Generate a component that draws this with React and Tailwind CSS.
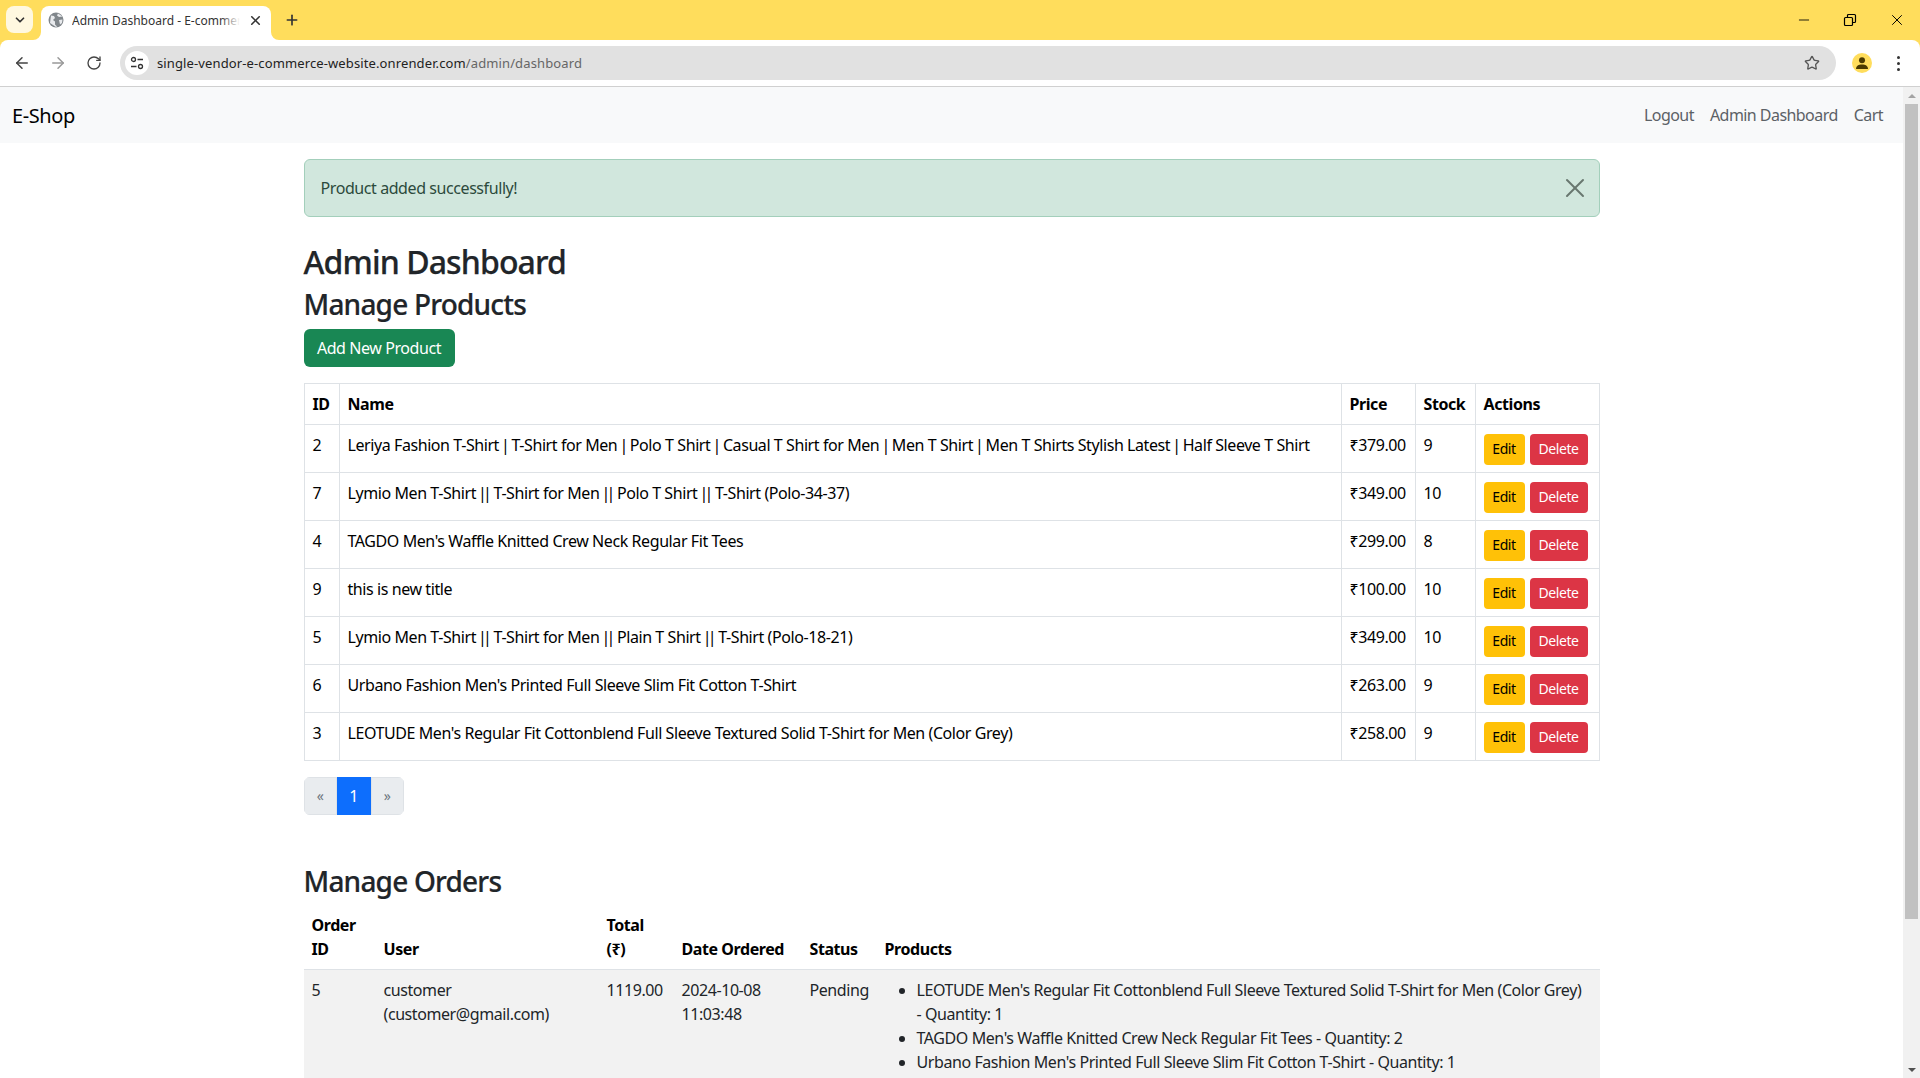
import { ArrowLeft, ArrowRight, ChevronDown, Minus, Plus, RotateCw, Star, X } from 'lucide-react';

const PRODUCTS = [
  { id: 2, name: 'Leriya Fashion T-Shirt | T-Shirt for Men | Polo T Shirt | Casual T Shirt for Men | Men T Shirt | Men T Shirts Stylish Latest | Half Sleeve T Shirt', price: '₹379.00', stock: 9 },
  { id: 7, name: 'Lymio Men T-Shirt || T-Shirt for Men || Polo T Shirt || T-Shirt (Polo-34-37)', price: '₹349.00', stock: 10 },
  { id: 4, name: "TAGDO Men's Waffle Knitted Crew Neck Regular Fit Tees", price: '₹299.00', stock: 8 },
  { id: 9, name: 'this is new title', price: '₹100.00', stock: 10 },
  { id: 5, name: 'Lymio Men T-Shirt || T-Shirt for Men || Plain T Shirt || T-Shirt (Polo-18-21)', price: '₹349.00', stock: 10 },
  { id: 6, name: "Urbano Fashion Men's Printed Full Sleeve Slim Fit Cotton T-Shirt", price: '₹263.00', stock: 9 },
  { id: 3, name: "LEOTUDE Men's Regular Fit Cottonblend Full Sleeve Textured Solid T-Shirt for Men (Color Grey)", price: '₹258.00', stock: 9 },
];

const ORDER_ITEMS = [
  "LEOTUDE Men's Regular Fit Cottonblend Full Sleeve Textured Solid T-Shirt for Men (Color Grey) - Quantity: 1",
  "TAGDO Men's Waffle Knitted Crew Neck Regular Fit Tees - Quantity: 2",
  "Urbano Fashion Men's Printed Full Sleeve Slim Fit Cotton T-Shirt - Quantity: 1",
];

// the pipe is much wider in this font than in the original, so tighten it
function ProductName({ name }) {
  return name.split('|').map((part, index) => (
    <span key={index}>
      {index > 0 && <span className="mx-[-1.7px]">|</span>}
      {part}
    </span>
  ));
}

function TabCorner({ flip }) {
  return (
    <svg width="8" height="8" viewBox="0 0 8 8" className={`shrink-0 self-end ${flip ? '-scale-x-100' : ''}`}>
      <path d="M8 0v8H0a8 8 0 0 0 8-8z" fill="#fff" />
    </svg>
  );
}

function BrowserChrome() {
  return (
    <div className="shrink-0 font-['Noto_Sans',sans-serif]">
      <div className="flex h-10 items-end bg-[#ffdd5c] pl-[6px]">
        <div className="mb-[7px] flex h-[27px] w-[27px] items-center justify-center rounded-lg bg-[#fff8e0]">
          <ChevronDown size={14} strokeWidth={3} className="text-[#333]" />
        </div>
        <TabCorner />
        <div className="relative flex h-[34px] w-[230px] items-center rounded-t-lg bg-white pb-[6px] pl-[7px]">
          <svg width="16" height="16" viewBox="0 0 16 16" className="shrink-0">
            <circle cx="8" cy="8" r="7.5" fill="#80868b" />
            <path d="M3 3.5l3 .5 1 2-2 2 2 1.5v3l2 2-1 .5-6-4zM10 1.5l-1 2 2 1.5 3.5-.5zM11 8l3.5-.5L14 11l-2 1.5z" fill="#e8eaed" />
          </svg>
          <div className="relative ml-[8px] w-[168px] overflow-hidden whitespace-nowrap pt-px text-[12px] tracking-normal text-[#333]">
            Admin Dashboard - E-commerce
            <div className="absolute inset-y-0 right-0 w-5 bg-gradient-to-r from-transparent to-white" />
          </div>
          <X size={15} strokeWidth={2.5} className="ml-[8px] text-[#333]" />
        </div>
        <TabCorner flip />
        <Plus size={16} strokeWidth={2.5} className="mb-[12px] ml-[5px] text-[#333]" />
        <div className="mb-[12px] ml-auto flex h-4 items-center gap-[30px] pr-[14px] text-black">
          <Minus size={16} strokeWidth={1.3} />
          <svg width="16" height="16" viewBox="0 0 16 16" fill="none" stroke="currentColor" strokeWidth="1.2">
            <rect x="2.5" y="5.5" width="8" height="8" rx="1" />
            <path d="M5.5 5V3.5a1 1 0 0 1 1-1h6a1 1 0 0 1 1 1v6a1 1 0 0 1-1 1H11" />
          </svg>
          <X size={18} strokeWidth={1.3} />
        </div>
      </div>
      <div className="bg-[#ffdd5c]">
        <div className="flex h-[46px] items-center rounded-t-lg bg-white pl-[13px] pr-[20px] text-[#444]">
          <ArrowLeft size={18} strokeWidth={2} />
          <ArrowRight size={18} strokeWidth={2} className="ml-[18px] text-[#999]" />
          <RotateCw size={16} strokeWidth={2} className="ml-[19px]" />
          <div className="ml-[18px] flex h-[34px] w-[1716px] items-center rounded-full bg-[#e1e1e1] pl-[5px] pr-[16px]">
            <div className="flex h-6 w-6 items-center justify-center rounded-full bg-white">
              <svg width="14" height="14" viewBox="0 0 14 14" fill="none" stroke="#333" strokeWidth="1.3">
                <circle cx="3.5" cy="3.5" r="2" />
                <path d="M7.5 3.5H13M1 10.5h5.5" />
                <circle cx="10.5" cy="10.5" r="2" />
              </svg>
            </div>
            <div className="ml-[8px] whitespace-nowrap text-[13px] tracking-[0.12px] text-[#222]">
              single-vendor-e-commerce-website.onrender.com<span className="text-[#666]">/admin/dashboard</span>
            </div>
            <Star size={16} strokeWidth={2} className="ml-auto text-[#555]" />
          </div>
          <div className="ml-[16px] flex h-5 w-5 items-center justify-center overflow-hidden rounded-full bg-[#ffdd5c]">
            <svg width="14" height="14" viewBox="0 0 14 14" fill="#4a3a00">
              <circle cx="7" cy="4.3" r="3" />
              <path d="M1 13c0-3.2 2.6-4.5 6-4.5s6 1.3 6 4.5z" />
            </svg>
          </div>
          <div className="ml-auto flex flex-col gap-[3px]">
            <span className="h-[3px] w-[3px] rounded-full bg-[#333]" />
            <span className="h-[3px] w-[3px] rounded-full bg-[#333]" />
            <span className="h-[3px] w-[3px] rounded-full bg-[#333]" />
          </div>
        </div>
      </div>
      <div className="h-px bg-[#d0d0d0]" />
    </div>
  );
}

function Scrollbar() {
  return (
    <div className="flex w-[17px] shrink-0 flex-col items-center bg-[#f1f1f1]">
      <div className="flex h-[17px] items-center justify-center">
        <div className="h-0 w-0 border-x-[4px] border-b-[4px] border-x-transparent border-b-[#a3a3a3]" />
      </div>
      <div className="h-[815px] w-[13px] bg-[#c1c1c1]" />
      <div className="mt-auto flex h-[17px] items-center justify-center">
        <div className="h-0 w-0 border-x-[4px] border-t-[4px] border-x-transparent border-t-[#505050]" />
      </div>
    </div>
  );
}

function ProductsTable() {
  const th = 'border border-[#dee2e6] p-2 text-left font-bold';
  const td = 'border border-[#dee2e6] p-2 align-top';
  return (
    <table className="w-full table-fixed border-collapse text-black">
      <thead>
        <tr className="h-[41px]">
          <th className={`${th} w-[35px]`}>ID</th>
          <th className={th}>Name</th>
          <th className={`${th} w-[74px]`}>Price</th>
          <th className={`${th} w-[60px]`}>Stock</th>
          <th className={`${th} w-[124px]`}>Actions</th>
        </tr>
      </thead>
      <tbody>
        {PRODUCTS.map((product) => (
          <tr key={product.id} className="h-[48px]">
            <td className={td}>{product.id}</td>
            <td className={`${td} whitespace-nowrap`}><ProductName name={product.name} /></td>
            <td className={td}>{product.price}</td>
            <td className={td}>{product.stock}</td>
            <td className={td}>
              <div className="-mb-px mt-px flex gap-[5px] text-[14px]">
                <button type="button" className="h-[31px] w-[41px] rounded bg-[#ffc107] text-black">Edit</button>
                <button type="button" className="h-[31px] w-[58px] rounded bg-[#dc3545] text-white">Delete</button>
              </div>
            </td>
          </tr>
        ))}
      </tbody>
    </table>
  );
}

function Pagination() {
  return (
    <div className="mt-4 flex h-[38px] w-fit overflow-hidden rounded-md text-[#6c757d]">
      <span className="flex w-[33px] items-center justify-center border border-[#dee2e6] bg-[#e9ecef] text-[14px]">«</span>
      <span className="flex w-[34px] items-center justify-center bg-[#0d6efd] text-white">1</span>
      <span className="flex w-[33px] items-center justify-center border border-[#dee2e6] bg-[#e9ecef] text-[14px]">»</span>
    </div>
  );
}

function OrdersTable() {
  return (
    <table className="mt-[6px] w-full table-fixed border-collapse text-[#212529]">
      <thead>
        <tr className="border-b border-[#dee2e6] align-bottom font-bold text-black">
          <th className="w-[72px] p-2 text-left">Order ID</th>
          <th className="w-[223px] p-2 text-left">User</th>
          <th className="w-[75px] p-2 text-left">Total (₹)</th>
          <th className="w-[128px] p-2 text-left">Date Ordered</th>
          <th className="w-[75px] p-2 text-left">Status</th>
          <th className="p-2 text-left">Products</th>
        </tr>
      </thead>
      <tbody>
        <tr className="bg-[#f2f2f2] align-top">
          <td className="p-2">5</td>
          <td className="p-2">customer (customer@gmail.com)</td>
          <td className="p-2">1119.00</td>
          <td className="p-2">2024-10-08 11:03:48</td>
          <td className="p-2">Pending</td>
          <td className="p-2">
            <ul className="list-disc pl-8 pr-2">
              {ORDER_ITEMS.map((item) => (
                <li key={item}>{item}</li>
              ))}
            </ul>
          </td>
        </tr>
      </tbody>
    </table>
  );
}

export default function App() {
  return (
    <div className="flex h-screen flex-col overflow-hidden bg-white font-['Noto_Sans',sans-serif] text-[16px] leading-6 tracking-[-0.42px] text-[#212529]">
      <BrowserChrome />
      <div className="flex min-h-0 flex-1">
        <div className="min-w-0 flex-1 overflow-hidden">
          <nav className="flex h-14 items-center bg-[#f8f9fa] pl-3 pr-5">
            <a className="pt-[2px] text-[20px] text-black">E-Shop</a>
            <div className="ml-auto flex gap-4 tracking-[-0.55px] text-[#5c6166]">
              <a>Logout</a>
              <a>Admin Dashboard</a>
              <a>Cart</a>
            </div>
          </nav>
          <main className="mx-auto w-[1320px] px-3 pt-4">
            <div className="mb-[26px] flex h-[58px] items-center justify-between rounded-md border border-[#a3cfbb] bg-[#d1e7dd] pl-4 pr-2 text-[#2c4a3c]">
              Product added successfully!
              <X size={32} strokeWidth={1.5} className="text-[#68776f]" />
            </div>
            <h1 className="mb-[7px] text-[32px] font-medium leading-[1.2] tracking-[-0.9px] [-webkit-text-stroke:0.25px]">Admin Dashboard</h1>
            <h2 className="mb-[7px] text-[28px] font-medium leading-[1.2] tracking-[-0.8px] [-webkit-text-stroke:0.2px]">Manage Products</h2>
            <button type="button" className="mb-4 flex h-[38px] w-[151px] items-center justify-center rounded-md bg-[#198754] text-white">Add New Product</button>
            <ProductsTable />
            <Pagination />
            <h2 className="mt-[50px] text-[28px] font-medium leading-[1.2] tracking-[-0.8px] [-webkit-text-stroke:0.2px]">Manage Orders</h2>
            <OrdersTable />
          </main>
        </div>
        <Scrollbar />
      </div>
    </div>
  );
}
